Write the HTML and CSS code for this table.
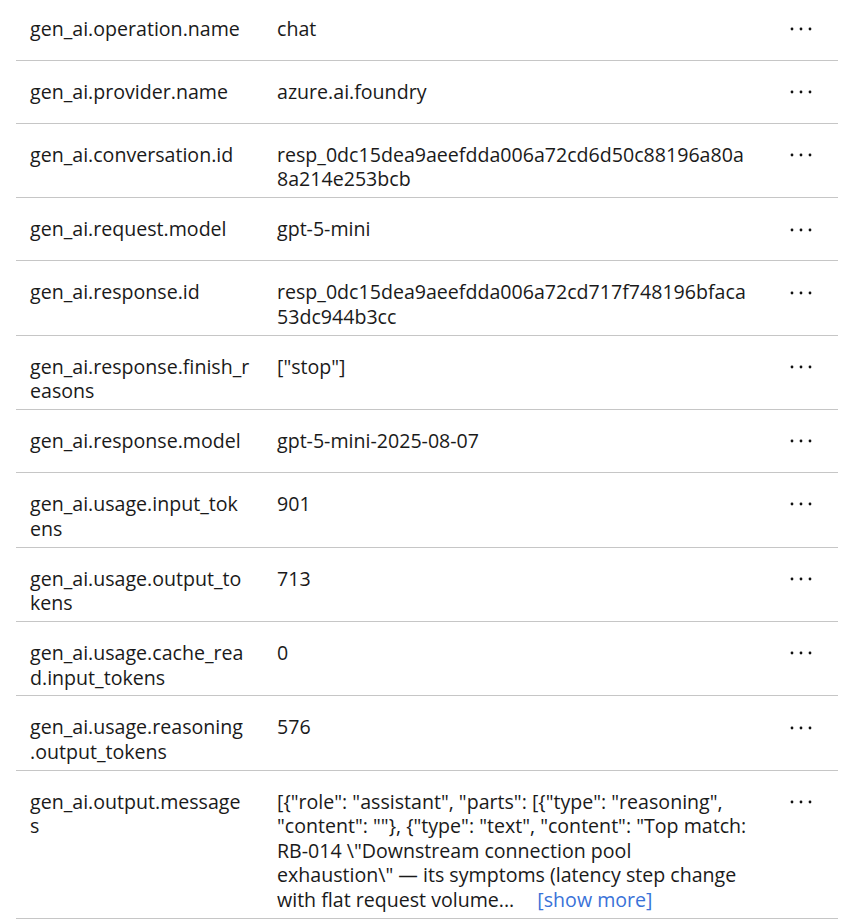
FILE: index.html
```html
<!DOCTYPE html>
<html lang="en">
<head>
<meta charset="utf-8">
<title>Attributes</title>
<link rel="stylesheet" href="styles.css">
</head>
<body>
<div class="props">
  <div class="row"><div class="key">gen_ai.operation.name</div><div class="val">chat</div><button class="more" aria-label="More"><svg width="22" height="4" viewBox="0 0 22 4"><circle cx="2" cy="2" r="1.4"/><circle cx="11" cy="2" r="1.4"/><circle cx="20" cy="2" r="1.4"/></svg></button></div>
  <div class="row"><div class="key">gen_ai.provider.name</div><div class="val">azure.ai.foundry</div><button class="more" aria-label="More"><svg width="22" height="4" viewBox="0 0 22 4"><circle cx="2" cy="2" r="1.4"/><circle cx="11" cy="2" r="1.4"/><circle cx="20" cy="2" r="1.4"/></svg></button></div>
  <div class="row"><div class="key">gen_ai.conversation.id</div><div class="val">resp_0dc15dea9aeefdda006a72cd6d50c88196a80a<br>8a214e253bcb</div><button class="more" aria-label="More"><svg width="22" height="4" viewBox="0 0 22 4"><circle cx="2" cy="2" r="1.4"/><circle cx="11" cy="2" r="1.4"/><circle cx="20" cy="2" r="1.4"/></svg></button></div>
  <div class="row"><div class="key">gen_ai.request.model</div><div class="val">gpt-5-mini</div><button class="more" aria-label="More"><svg width="22" height="4" viewBox="0 0 22 4"><circle cx="2" cy="2" r="1.4"/><circle cx="11" cy="2" r="1.4"/><circle cx="20" cy="2" r="1.4"/></svg></button></div>
  <div class="row"><div class="key">gen_ai.response.id</div><div class="val">resp_0dc15dea9aeefdda006a72cd717f748196bfaca<br>53dc944b3cc</div><button class="more" aria-label="More"><svg width="22" height="4" viewBox="0 0 22 4"><circle cx="2" cy="2" r="1.4"/><circle cx="11" cy="2" r="1.4"/><circle cx="20" cy="2" r="1.4"/></svg></button></div>
  <div class="row"><div class="key">gen_ai.response.finish_r<br>easons</div><div class="val">["stop"]</div><button class="more" aria-label="More"><svg width="22" height="4" viewBox="0 0 22 4"><circle cx="2" cy="2" r="1.4"/><circle cx="11" cy="2" r="1.4"/><circle cx="20" cy="2" r="1.4"/></svg></button></div>
  <div class="row"><div class="key">gen_ai.response.model</div><div class="val">gpt-5-mini-2025-08-07</div><button class="more" aria-label="More"><svg width="22" height="4" viewBox="0 0 22 4"><circle cx="2" cy="2" r="1.4"/><circle cx="11" cy="2" r="1.4"/><circle cx="20" cy="2" r="1.4"/></svg></button></div>
  <div class="row"><div class="key">gen_ai.usage.input_tok<br>ens</div><div class="val">901</div><button class="more" aria-label="More"><svg width="22" height="4" viewBox="0 0 22 4"><circle cx="2" cy="2" r="1.4"/><circle cx="11" cy="2" r="1.4"/><circle cx="20" cy="2" r="1.4"/></svg></button></div>
  <div class="row"><div class="key">gen_ai.usage.output_to<br>kens</div><div class="val">713</div><button class="more" aria-label="More"><svg width="22" height="4" viewBox="0 0 22 4"><circle cx="2" cy="2" r="1.4"/><circle cx="11" cy="2" r="1.4"/><circle cx="20" cy="2" r="1.4"/></svg></button></div>
  <div class="row"><div class="key">gen_ai.usage.cache_rea<br>d.input_tokens</div><div class="val">0</div><button class="more" aria-label="More"><svg width="22" height="4" viewBox="0 0 22 4"><circle cx="2" cy="2" r="1.4"/><circle cx="11" cy="2" r="1.4"/><circle cx="20" cy="2" r="1.4"/></svg></button></div>
  <div class="row"><div class="key">gen_ai.usage.reasoning<br>.output_tokens</div><div class="val">576</div><button class="more" aria-label="More"><svg width="22" height="4" viewBox="0 0 22 4"><circle cx="2" cy="2" r="1.4"/><circle cx="11" cy="2" r="1.4"/><circle cx="20" cy="2" r="1.4"/></svg></button></div>
  <div class="row"><div class="key">gen_ai.output.message<br>s</div><div class="val">[{"role": "assistant", "parts": [{"type": "reasoning",<br>"content": ""}, {"type": "text", "content": "Top match:<br>RB-014 \"Downstream connection pool<br>exhaustion\" — its symptoms (latency step change<br>with flat request volume... <a class="showmore" href="#">[show more]</a></div><button class="more" aria-label="More"><svg width="22" height="4" viewBox="0 0 22 4"><circle cx="2" cy="2" r="1.4"/><circle cx="11" cy="2" r="1.4"/><circle cx="20" cy="2" r="1.4"/></svg></button></div>
</div>
</body>
</html>
```
FILE: styles.css
```css
html, body {
  margin: 0;
  padding: 0;
  background: #ffffff;
}
body {
  font-family: "Open Sans", "Noto Sans", "Liberation Sans", sans-serif;
  font-size: 19.6px;
  color: #1a1a1a;
}
.props {
  margin: -2px 19px 0 16px;
}
.row {
  display: grid;
  grid-template-columns: 233px 483px 1fr;
  column-gap: 14px;
  padding: 19px 0 5.4px 14px;
  min-height: 37.6px;
  border-bottom: 1px solid #c6c6c6;
  line-height: 24.52px;
}
.key, .val {
  white-space: nowrap;
}
.showmore {
  color: #3a72d8;
  text-decoration: none;
  margin-left: 18px;
}
.more {
  border: 0;
  background: transparent;
  padding: 0;
  height: 24.52px;
  display: flex;
  align-items: center;
  justify-content: flex-start;
  padding-left: 16px;
  fill: #111111;
  cursor: pointer;
}
.more svg {
  display: block;
}
```
